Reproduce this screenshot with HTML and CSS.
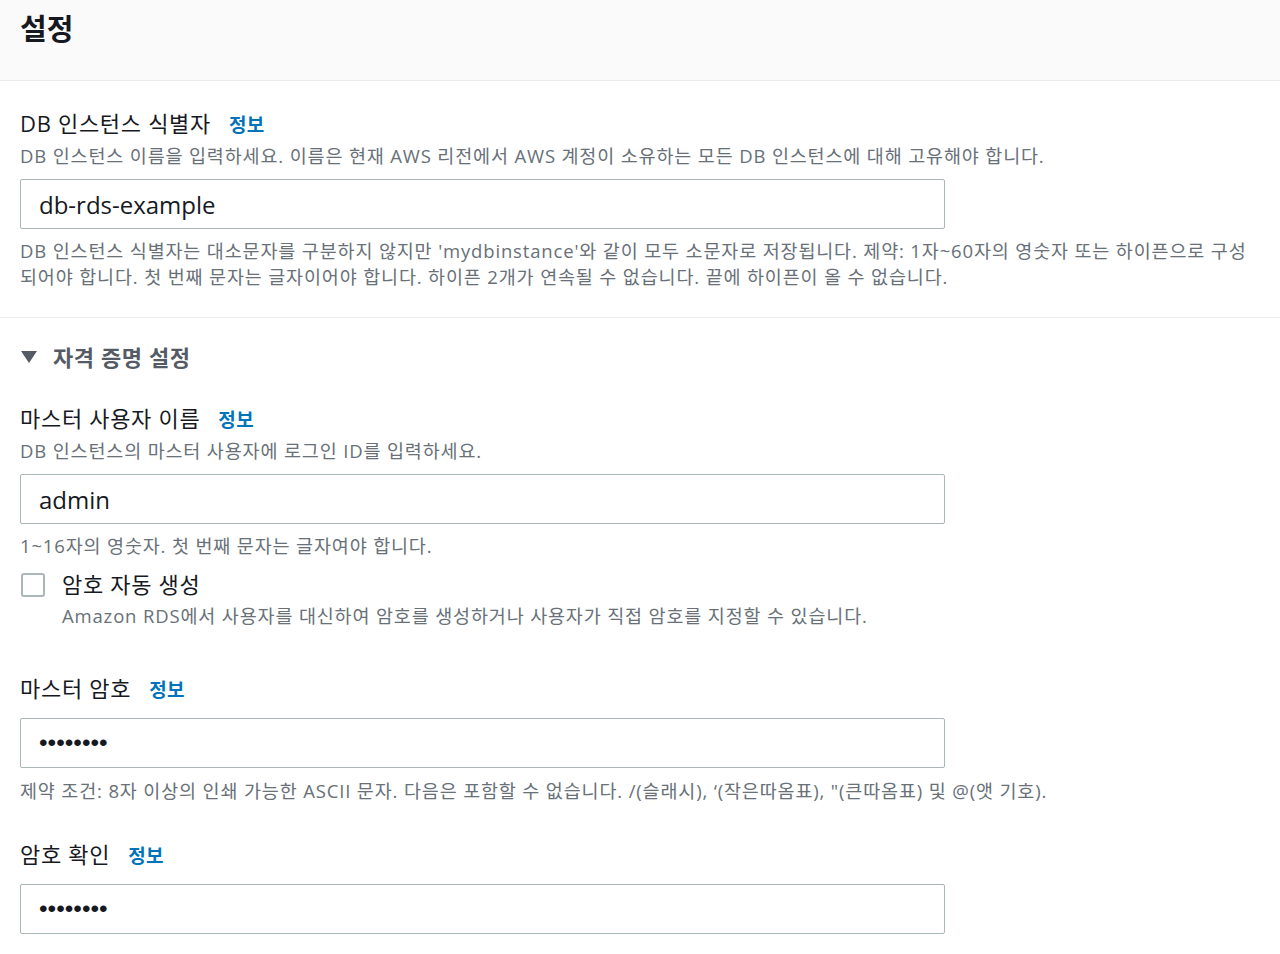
FILE: index.html
```html
<!DOCTYPE html>
<html lang="ko">
<head>
<meta charset="utf-8">
<link rel="stylesheet" href="styles.css">
</head>
<body>
<div class="page">
  <header class="header">
    <h1 class="title">설정</h1>
  </header>

  <section class="section first">
    <div class="field">
      <div class="label">DB 인스턴스 식별자<a class="info">정보</a></div>
      <div class="desc">DB 인스턴스 이름을 입력하세요. 이름은 현재 AWS 리전에서 AWS 계정이 소유하는 모든 DB 인스턴스에 대해 고유해야 합니다.</div>
      <input class="input" type="text" value="db-rds-example">
      <div class="hint">DB 인스턴스 식별자는 대소문자를 구분하지 않지만 'mydbinstance'와 같이 모두 소문자로 저장됩니다. 제약: 1자~60자의 영숫자 또는 하이픈으로 구성되어야 합니다. 첫 번째 문자는 글자이어야 합니다. 하이픈 2개가 연속될 수 없습니다. 끝에 하이픈이 올 수 없습니다.</div>
    </div>
  </section>

  <section class="section second">
    <div class="expander">
      <svg class="caret" width="16" height="12" viewBox="0 0 16 12"><polygon points="0,0 16,0 8,12" fill="#545b64"/></svg>
      <span>자격 증명 설정</span>
    </div>

    <div class="field f-user">
      <div class="label">마스터 사용자 이름<a class="info">정보</a></div>
      <div class="desc">DB 인스턴스의 마스터 사용자에 로그인 ID를 입력하세요.</div>
      <input class="input" type="text" value="admin">
      <div class="hint">1~16자의 영숫자. 첫 번째 문자는 글자여야 합니다.</div>
    </div>

    <div class="check-row">
      <span class="checkbox"></span>
      <div class="check-text">
        <div class="label">암호 자동 생성</div>
        <div class="desc">Amazon RDS에서 사용자를 대신하여 암호를 생성하거나 사용자가 직접 암호를 지정할 수 있습니다.</div>
      </div>
    </div>

    <div class="field f-pass">
      <div class="label">마스터 암호<a class="info">정보</a></div>
      <input class="input pw" type="password" value="12345678">
      <div class="hint">제약 조건: 8자 이상의 인쇄 가능한 ASCII 문자. 다음은 포함할 수 없습니다. /(슬래시), ‘(작은따옴표), "(큰따옴표) 및 @(앳 기호).</div>
    </div>

    <div class="field f-confirm">
      <div class="label">암호 확인<a class="info">정보</a></div>
      <input class="input pw" type="password" value="12345678">
    </div>
  </section>
</div>
</body>
</html>
```

FILE: styles.css
```css
* { box-sizing: border-box; }
html, body { margin: 0; padding: 0; background: #ffffff; }
body {
  font-family: "Open Sans", "Noto Sans CJK KR", sans-serif;
  color: #16191f;
  width: 1280px;
  height: 954px;
  overflow: hidden;
}
.header {
  background: #fafafa;
  height: 81px;
  border-bottom: 1px solid #eaeded;
  padding: 9px 20px 0;
}
.title {
  margin: 0;
  font-size: 29px;
  font-weight: 700;
  line-height: 40px;
  color: #16191f;
}
.section { padding: 0 20px; }
.section.first {
  padding-top: 27px;
  padding-bottom: 27px;
  border-bottom: 1px solid #eaeded;
}
.section.second { padding-top: 24px; }
.label {
  font-size: 22px;
  line-height: 30px;
  letter-spacing: 0.7px;
  color: #16191f;
  margin-bottom: 3px;
}
.info {
  color: #0073bb;
  font-weight: 700;
  font-size: 19px;
  letter-spacing: 0.3px;
  margin-left: 18px;
  text-decoration: none;
}
.desc {
  font-size: 18.5px;
  line-height: 26px;
  letter-spacing: 0.84px;
  color: #687078;
}
.input {
  display: block;
  width: 925px;
  height: 50px;
  margin-top: 10px;
  border: 1px solid #aab7b8;
  border-radius: 2px;
  padding: 0 18px;
  font-family: "Open Sans", "Noto Sans CJK KR", sans-serif;
  font-size: 24px;
  color: #16191f;
  background: #fff;
  outline: none;
}
.input.pw { font-family: "Liberation Sans", sans-serif; font-size: 24.5px; }
.hint {
  margin-top: 9px;
  font-size: 18.5px;
  line-height: 26px;
  letter-spacing: 0.84px;
  color: #687078;
}
.expander {
  display: flex;
  align-items: center;
  gap: 16px;
  font-size: 22px;
  line-height: 30px;
  letter-spacing: 0.6px;
  font-weight: 700;
  color: #545b64;
}
.caret { margin-left: 1px; }
.f-user { margin-top: 31px; }
.f-user .desc { margin-top: 1px; }
.check-row {
  display: flex;
  align-items: flex-start;
  gap: 17px;
  margin-top: 10px;
}
.checkbox {
  width: 24px;
  height: 24px;
  border: 2px solid #aab7b8;
  border-radius: 3px;
  margin-top: 4px;
  margin-left: 1px;
  flex: none;
}
.check-text .label { margin-bottom: 4px; }
.f-pass { margin-top: 44px; }
.f-pass .input { margin-top: 13px; }
.f-confirm .input { margin-top: 13px; }
.f-pass .label, .f-confirm .label { margin-bottom: 0; }
.f-pass .hint { margin-top: 10px; }
.f-confirm { margin-top: 35px; }
```
